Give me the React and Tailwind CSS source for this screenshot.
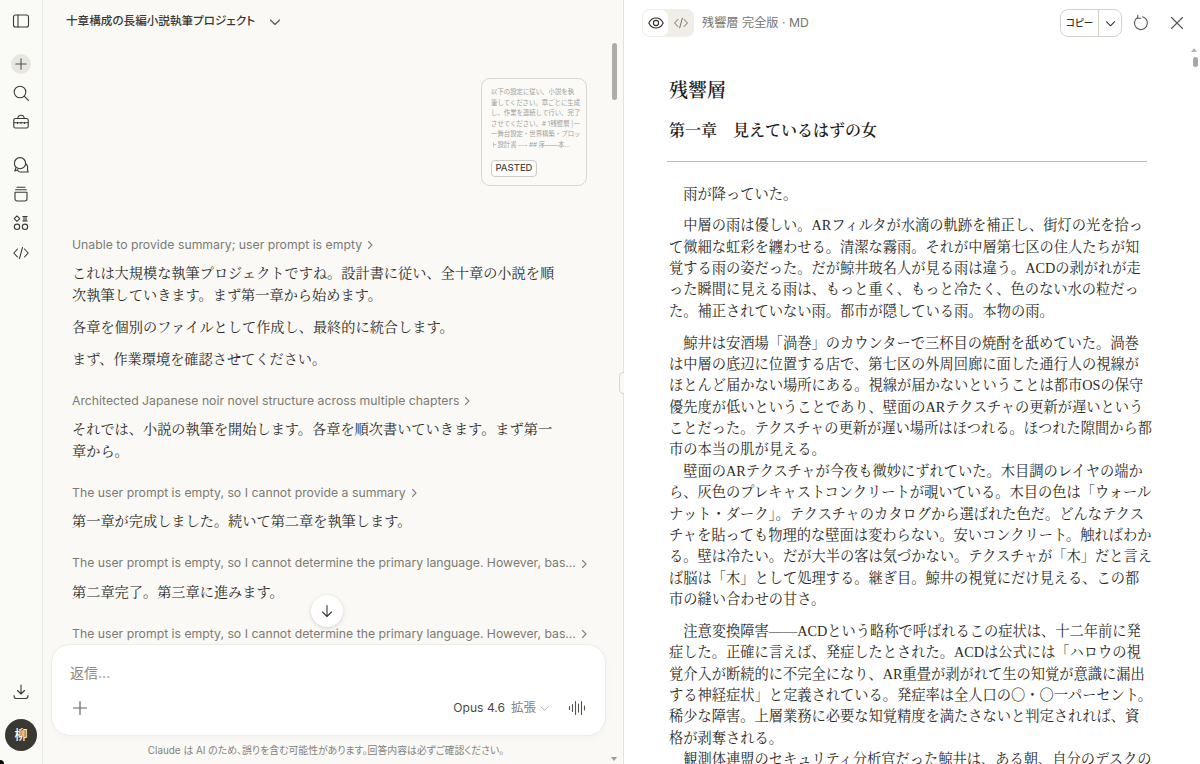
import React from "react";

const serif = "font-['Liberation_Serif','Noto_Serif_CJK_JP','Noto_Sans_CJK_JP',serif]";
const sans = "font-['Inter','Noto_Sans_CJK_JP',sans-serif] [font-feature-settings:'palt']";

const I = ({ children, size = 18, className = "", sw = 1.1, vb = 18 }) => (
  <svg width={size} height={size} viewBox={`0 0 ${vb} ${vb}`} fill="none" stroke="currentColor" strokeWidth={sw} strokeLinecap="round" strokeLinejoin="round" className={className}>
    {children}
  </svg>
);

const Chev = ({ className = "", size = 10 }) => (
  <I size={size} vb={10} className={className}><path d="M3.5 1.5 7 5 3.5 8.5" /></I>
);
const ChevD = ({ className = "", size = 12 }) => (
  <I size={size} vb={12} className={className}><path d="M1.5 4 6 8.5 10.5 4" /></I>
);

function Rail() {
  return (
    <aside className="w-[43px] shrink-0 h-full flex flex-col items-center bg-[#fafaf7] border-r border-[#eceae4] text-[#3b3a36]">
      <div className="mt-[12px] h-[18px]">
        <I><rect x="1.5" y="3" width="15" height="12" rx="2" /><path d="M6 3v12" /></I>
      </div>
      <div className="mt-[24px] w-[20px] h-[20px] rounded-full bg-[#e8e6e0] flex items-center justify-center text-[#55534e]">
        <I size={14} vb={14}><path d="M7 1.8v10.4M1.8 7h10.4" /></I>
      </div>
      <div className="mt-[10px] h-[18px]">
        <I><circle cx="8" cy="8" r="5.8" /><path d="m12.4 12.4 4 4" /></I>
      </div>
      <div className="mt-[11px] h-[18px]">
        <I><rect x="1.8" y="5.5" width="14.4" height="9.5" rx="1.5" /><path d="M5.8 5.5c0-4.4 6.4-4.4 6.4 0M1.8 9.7h14.4M5.5 9.2v1.2M9 9.2v1.2M12.5 9.2v1.2" /></I>
      </div>
      <div className="mt-[25px] h-[18px]">
        <I><circle cx="8" cy="7.200" r="5.600" /><path d="M4 11.500 2.800 15l3-1.300M13.600 7.800c2 1.500 2.400 3.700 1.800 5.400l.8 2.800H8.500c-1.300 0-2.200-.6-2.700-1.500" /></I>
      </div>
      <div className="mt-[11px] h-[18px]">
        <I><path d="M5 2.200h8M3.600 4.800h10.800" /><path d="M3 7.200h12v6.600a2.200 2.200 0 0 1-2.200 2.200H5.200A2.200 2.200 0 0 1 3 13.800z" /></I>
      </div>
      <div className="mt-[11px] h-[18px]">
        <I><path d="m5 1.800 2.800 2.800L5 7.400 2.200 4.600zM10.800 2.500h4.400M10.800 7h4.400M12 2.500V7M14 2.500V7" /><circle cx="5" cy="12.800" r="2.700" /><circle cx="13" cy="12.800" r="2.700" /></I>
      </div>
      <div className="mt-[12px] h-[18px]">
        <I><path d="M5.500 5 1.800 9l3.700 4M12.500 5l3.700 4-3.700 4M10.500 3.500l-3 11" /></I>
      </div>
      <div className="flex-1" />
      <div className="h-[18px] mb-[18px]">
        <I><path d="M9 2v8.500M5.500 7.500 9 11l3.500-3.500M2 12.500c0 1.500.500 3 2 3h10c1.500 0 2-1.500 2-3" /></I>
      </div>
      <div className={`w-[32px] h-[32px] mb-[13px] rounded-full bg-[#3a3832] text-white text-[13px] font-medium flex items-center justify-center ${sans}`}>柳</div>
    </aside>
  );
}

function Summary({ text, className = "" }) {
  return (
    <div className={`h-[20px] flex items-center gap-[3px] text-[12.250px] text-[#7d7b73] whitespace-nowrap ${sans} ${className}`}>
      <span>{text}</span>
      <Chev className="text-[#85837b]" />
    </div>
  );
}

function Para({ lines, className = "" }) {
  return (
    <div className={`text-[14.200px] leading-[21.500px] text-[#2c2b27] whitespace-nowrap ${serif} ${className}`}>
      {lines.map((l) => <div key={l}>{l}</div>)}
    </div>
  );
}

function PastedCard() {
  const lines = ["以下の設定に従い、小説を執", "筆してください。章ごとに生成", "し、作業を連続して行い、完了", "させてください。# 1残響層 |一", "一舞台設定・世界構築・プロッ", "ト設計書 --- ## 序――本…"];
  return (
    <div className="flex justify-end pr-[36px] pt-[35px]">
      <div className={`w-[106px] h-[108px] rounded-[9px] border border-[#d9d7d0] bg-[#fbfaf7] pl-[9px] pt-[8px] ${sans}`}>
        <div className="text-[6.400px] leading-[10.600px] text-[#a19f97] whitespace-nowrap overflow-hidden [font-feature-settings:normal]">
          {lines.map((l) => <div key={l}>{l}</div>)}
        </div>
        <div className="mt-[9px] w-[46px] h-[17px] rounded-[4px] border border-[#cfcdc6] bg-white flex items-center justify-center text-[9.500px] font-medium text-[#4a4943]">PASTED</div>
      </div>
    </div>
  );
}

function Thread() {
  const cut = "The user prompt is empty, so I cannot determine the primary language. However, bas…";
  return (
    <div className="relative flex-1 overflow-hidden min-h-0">
      <PastedCard />
      <div className="pl-[29px] pt-[49px]">
        <Summary text="Unable to provide summary; user prompt is empty" />
        <Para className="mt-[8px]" lines={["これは大規模な執筆プロジェクトですね。設計書に従い、全十章の小説を順", "次執筆していきます。まず第一章から始めます。"]} />
        <Para className="mt-[10.500px]" lines={["各章を個別のファイルとして作成し、最終的に統合します。"]} />
        <Para className="mt-[10.500px]" lines={["まず、作業環境を確認させてください。"]} />
        <Summary className="mt-[21px]" text="Architected Japanese noir novel structure across multiple chapters" />
        <Para className="mt-[8px]" lines={["それでは、小説の執筆を開始します。各章を順次書いていきます。まず第一", "章から。"]} />
        <Summary className="mt-[21px]" text="The user prompt is empty, so I cannot provide a summary" />
        <Para className="mt-[8px]" lines={["第一章が完成しました。続いて第二章を執筆します。"]} />
        <Summary className="mt-[21px]" text={cut} />
        <Para className="mt-[8px]" lines={["第二章完了。第三章に進みます。"]} />
        <Summary className="mt-[21px]" text={cut} />
      </div>
      <div className="absolute left-[268px] top-[552px] w-[32px] h-[32px] rounded-full bg-white shadow-[0_1px_4px_rgba(0,0,0,0.16)] flex items-center justify-center text-[#3b3a36]">
        <I size={16} vb={16}><path d="M8 2.500v11M3.500 9 8 13.500 12.500 9" /></I>
      </div>
    </div>
  );
}

function Composer() {
  return (
    <div className="shrink-0">
      <div className={`ml-2 mr-[17px] h-[92px] rounded-[19px] bg-white border border-[#eeece6] shadow-[0_2px_6px_rgba(0,0,0,0.03)] flex flex-col ${sans}`}>
        <div className="pl-[18px] pt-[17px] text-[14px] leading-[22px] text-[#8a8880]">返信…</div>
        <div className="mt-[12px] pl-[20px] pr-[17px] flex items-center h-[24px] text-[#66645e]">
          <I size={16} vb={16} sw={1.200}><path d="M8 1.500v13M1.500 8h13" /></I>
          <div className="flex-1" />
          <span className="text-[12.100px] text-[#4b4a45]">Opus 4.6</span>
          <span className="ml-[6px] text-[12.500px] text-[#85837b]">拡張</span>
          <ChevD size={9} className="ml-[4px] text-[#9a9890]" />
          <I size={20} vb={20} className="ml-[19px] text-[#55534e]"><path d="M1.500 8.500v3M4.500 6.500v7M7.500 3.500v13M10.500 6v8M13.500 3.500v13M16.500 8v4" /></I>
        </div>
      </div>
      <div className={`h-[28px] flex items-center justify-center pr-[14px] text-[9.900px] text-[#85837b] ${sans}`}>Claude は AI のため、誤りを含む可能性があります。回答内容は必ずご確認ください。</div>
    </div>
  );
}

function MainColumn() {
  return (
    <main className="relative w-[581px] shrink-0 h-full flex flex-col bg-[#faf9f5] border-r border-[#e4e2db]">
      <header className={`h-[43px] shrink-0 pl-[23px] flex items-center text-[#3a3934] ${sans}`}>
        <span className="text-[11.600px] font-medium">十章構成の長編小説執筆プロジェクト</span>
        <ChevD className="ml-[14px] text-[#55534e]" />
      </header>
      <Thread />
      <Composer />
      <div className="absolute right-[6px] top-[43px] w-[5px] h-[57px] rounded-full bg-[#aeada8]" />
      <div className="absolute right-[6px] bottom-[3px] w-0 h-0 border-x-[3px] border-x-transparent border-t-[4px] border-t-[#9b9a95]" />
      <div className="absolute right-[-4px] top-[372px] w-[8px] h-[22px] rounded-full bg-[#faf9f5] border border-[#d9d7d0]" />
    </main>
  );
}

function PreviewHeader() {
  return (
    <div className={`h-[46px] shrink-0 flex items-center pl-[18px] pr-[14px] ${sans}`}>
      <div className="w-[52px] h-[28px] rounded-[8px] bg-[#f0eee7] flex items-center p-[1px]">
        <div className="w-[25px] h-[26px] rounded-[7px] bg-white flex items-center justify-center text-[#2f2e2a]">
          <I size={18}><path d="M1.800 9C3.500 5.500 6 4 9 4s5.500 1.500 7.200 5c-1.700 3.500-4.200 5-7.200 5S3.500 12.500 1.800 9z" /><circle cx="9" cy="9" r="2.600" /></I>
        </div>
        <div className="flex-1 flex items-center justify-center text-[#6f6d66]">
          <I size={16}><path d="M5.500 5 1.800 9l3.700 4M12.500 5l3.700 4-3.700 4M10.500 3.500l-3 11" /></I>
        </div>
      </div>
      <span className="ml-[8px] text-[12.200px] text-[#77756e]">残響層 完全版 · MD</span>
      <div className="flex-1" />
      <div className="w-[62px] h-[28px] rounded-[8px] border border-[#d3d1ca] flex items-stretch text-[#2f2e2a]">
        <div className="w-[38px] flex items-center justify-center text-[9.500px] font-medium border-r border-[#d3d1ca]">コピー</div>
        <div className="flex-1 flex items-center justify-center"><ChevD size={11} /></div>
      </div>
      <div className="ml-[10px] w-[18px] h-[18px] text-[#55534e]">
        <I size={18}><path d="M5.600 3.500a6.500 6.500 0 1 0 5-.700M5.800 1.300v3h3" /></I>
      </div>
      <div className="ml-[18px] w-[18px] h-[18px] text-[#55534e]">
        <I size={18}><path d="m3.500 3.500 11 11M14.500 3.500l-11 11" /></I>
      </div>
    </div>
  );
}

const body = [
  { l: ["　雨が降っていた。"], mt: 0 },
  { l: ["　中層の雨は優しい。ARフィルタが水滴の軌跡を補正し、街灯の光を拾っ", "て微細な虹彩を纏わせる。清潔な霧雨。それが中層第七区の住人たちが知", "覚する雨の姿だった。だが鯨井玻名人が見る雨は違う。ACDの剥がれが走", "った瞬間に見える雨は、もっと重く、もっと冷たく、色のない水の粒だっ", "た。補正されていない雨。都市が隠している雨。本物の雨。"], mt: 10 },
  { l: ["　鯨井は安酒場「渦巻」のカウンターで三杯目の焼酎を舐めていた。渦巻", "は中層の底辺に位置する店で、第七区の外周回廊に面した通行人の視線が", "ほとんど届かない場所にある。視線が届かないということは都市OSの保守", "優先度が低いということであり、壁面のARテクスチャの更新が遅いという", "ことだった。テクスチャの更新が遅い場所はほつれる。ほつれた隙間から都", "市の本当の肌が見える。"], mt: 10.7 },
  { l: ["　壁面のARテクスチャが今夜も微妙にずれていた。木目調のレイヤの端か", "ら、灰色のプレキャストコンクリートが覗いている。木目の色は「ウォール", "ナット・ダーク」。テクスチャのカタログから選ばれた色だ。どんなテクス", "チャを貼っても物理的な壁面は変わらない。安いコンクリート。触ればわか", "る。壁は冷たい。だが大半の客は気づかない。テクスチャが「木」だと言え", "ば脳は「木」として処理する。継ぎ目。鯨井の視覚にだけ見える、この都", "市の縫い合わせの甘さ。"], mt: 0 },
  { l: ["　注意変換障害――ACDという略称で呼ばれるこの症状は、十二年前に発", "症した。正確に言えば、発症したとされた。ACDは公式には「ハロウの視", "覚介入が断続的に不完全になり、AR重畳が剥がれて生の知覚が意識に漏出", "する神経症状」と定義されている。発症率は全人口の〇・〇一パーセント。", "稀少な障害。上層業務に必要な知覚精度を満たさないと判定されれば、資", "格が剥奪される。"], mt: 10.7 },
  { l: ["　観測体連盟のセキュリティ分析官だった鯨井は、ある朝、自分のデスクの"], mt: 0 },
];

function Preview() {
  return (
    <section className="relative flex-1 min-w-0 h-full flex flex-col bg-white">
      <PreviewHeader />
      <div className={`flex-1 min-h-0 overflow-hidden pl-[45px] ${serif}`}>
        <h1 className="mt-[33px] text-[19px] leading-[24px] font-semibold text-[#1f1e1b]">残響層</h1>
        <h2 className="mt-[16px] text-[16px] leading-[24px] font-semibold text-[#1f1e1b]">第一章　見えているはずの女</h2>
        <div className="mt-[18px] ml-[-2px] w-[480px] h-px bg-[#bdbcb8]" />
        <div className="mt-[22px]">
          {body.map((p, i) => (
            <div key={i} style={{ marginTop: p.mt }} className="text-[14.250px] leading-[21.350px] text-[#2c2b27] whitespace-nowrap">
              {p.l.map((x) => <div key={x}>{x}</div>)}
            </div>
          ))}
        </div>
      </div>
      <div className="absolute right-[3px] top-[48px] w-0 h-0 border-x-[3px] border-x-transparent border-b-[4px] border-b-[#b5b4b0]" />
      <div className="absolute right-[2px] top-[57px] w-[5px] h-[10px] rounded-full bg-[#a9a8a4]" />
    </section>
  );
}

export default function App() {
  return (
    <div className="relative w-[1200px] h-[764px] flex overflow-hidden bg-white">
      <Rail />
      <MainColumn />
      <Preview />
      <div className="absolute left-0 bottom-0 w-[4px] h-[4px] bg-black rounded-tr-full" />
    </div>
  );
}
